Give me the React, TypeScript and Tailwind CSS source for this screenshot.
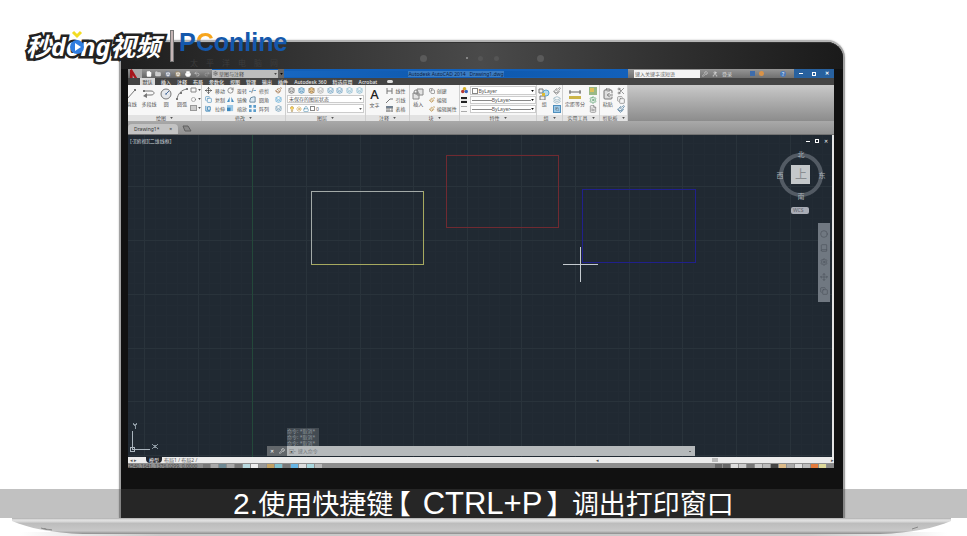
import {
  Book,
  Circle,
  ClipboardCopy,
  Copy,
  FileText,
  Folder,
  Layers,
  Lightbulb,
  Move,
  Paintbrush,
  Printer,
  Redo2,
  RotateCw,
  Save,
  Scissors,
  Settings,
  Sun,
  Undo2,
  User,
  Lock,
  Wrench,
} from "lucide-react";
import type { ReactNode } from "react";

const ribbonTabs = ["插入", "注释", "布局", "参数化", "视图", "管理", "输出", "插件", "Autodesk 360", "精选应用", "Acrobat"];

const modifyTools = [
  { label: "移动", icon: <Move className="size-[7px] text-[#222]" /> },
  { label: "旋转", icon: <RotateCw className="size-[7px] text-[#555]" /> },
  { label: "修剪", icon: <TrimIcon /> },
  { label: "复制", icon: <Copy className="size-[7px] text-[#3d86b8]" /> },
  { label: "镜像", icon: <MirrorIcon /> },
  { label: "圆角", icon: <FilletIcon /> },
  { label: "拉伸", icon: <StretchIcon /> },
  { label: "缩放", icon: <ScaleIcon /> },
  { label: "阵列", icon: <ArrayIcon /> },
];

function TrimIcon() {
  return (
    <svg viewBox="0 0 8 8" className="size-[7px]">
      <path d="M0 5h3M5 4h3" stroke="#5b9ac5" />
      <path d="M5 1 3 7" stroke="#888" />
    </svg>
  );
}

function MirrorIcon() {
  return (
    <svg viewBox="0 0 8 8" className="size-[7px]">
      <path d="M3 1v6H0zM5 1v6h3z" fill="#4a8fc0" />
    </svg>
  );
}

function FilletIcon() {
  return (
    <svg viewBox="0 0 8 8" className="size-[7px]">
      <path d="M1 7V5a4 4 0 0 1 4-4h2v6z" fill="#dbe9f3" stroke="#5c7f99" strokeWidth="1" />
    </svg>
  );
}

function StretchIcon() {
  return (
    <svg viewBox="0 0 8 8" className="size-[7px]">
      <path d="M1 1v6h5M3 2h3v4H3z" fill="none" stroke="#337fb5" strokeWidth="1" />
    </svg>
  );
}

function ScaleIcon() {
  return (
    <svg viewBox="0 0 8 8" className="size-[7px]">
      <path d="M0 0h7v7H0z" fill="#9cc8e6" />
      <path d="M0 3h4v4H0z" fill="#3b87bd" />
    </svg>
  );
}

function ArrayIcon() {
  return (
    <svg viewBox="0 0 8 8" className="size-[7px]">
      <path d="M0 0h3v3H0zM5 0h3v3H5zM0 5h3v3H0zM5 5h3v3H5z" fill="#5a9ccb" />
    </svg>
  );
}

function LineIcon() {
  return (
    <svg viewBox="0 0 12 12" className="size-3">
      <path d="M1 11 9 2" stroke="#777" />
      <path d="M0 10h2v2H0zM8 1h2v2H8z" fill="#777" />
    </svg>
  );
}

function PolylineIcon() {
  return (
    <svg viewBox="0 0 12 12" className="size-3">
      <path d="M1 3h7c4 0 4 4 0 4H2" fill="none" stroke="#777" />
      <path d="M0 8 4 5v5zM0 2h2v2H0z" fill="#777" />
    </svg>
  );
}

function CircleIcon() {
  return (
    <svg viewBox="0 0 12 12" className="size-3">
      <circle cx="6" cy="6" r="5" fill="#e6e8ec" stroke="#777" />
      <path d="m6 6 3-3M5 6h2" stroke="#4a6f9e" />
    </svg>
  );
}

function ArcIcon() {
  return (
    <svg viewBox="0 0 12 12" className="size-3">
      <path d="M1 11C2 6 5 2 11 1" fill="none" stroke="#777" />
      <path d="M0 10h2v2H0zM4 4h2v2H4zM10 0h2v2h-2z" fill="#777" />
    </svg>
  );
}

function Caret() {
  return (
    <svg viewBox="0 0 4 3" className="h-[2px] w-[3px] shrink-0">
      <path d="M0 0h4L2 3z" fill="currentColor" />
    </svg>
  );
}

function Panel({ title, className, children }: { title: string; className: string; children: ReactNode }) {
  return (
    <section className={`flex h-9 shrink-0 flex-col overflow-hidden border-r border-[#cfcfcf] bg-[#f7f7f7] text-[#555] ${className}`}>
      <div className="flex h-[30px] items-start justify-around pt-px">{children}</div>
      <h3 className="flex h-[6px] items-center justify-center gap-1 whitespace-nowrap bg-[#e2e2e2]">
        {title}
        <Caret />
      </h3>
    </section>
  );
}

function BigTool({ label, children }: { label: string; children: ReactNode }) {
  return (
    <button className="flex flex-col items-center gap-px whitespace-nowrap pt-[2px]">
      {children}
      {label}
    </button>
  );
}

function TitleBar() {
  return (
    <header className="flex h-[9px] items-center bg-[#1260ba] text-[#ddd]">
      <div className="flex h-full w-[84px] shrink-0 items-center justify-around bg-linear-to-b from-[#969696] to-[#656565]">
        <span className="flex h-full w-3 items-center bg-[#aaa]">
          <svg viewBox="0 0 10 10" className="size-[9px]">
            <path d="M0 10V1l2-1 6 10H5L3 7v3z" fill="#a8161c" />
          </svg>
        </span>
        <FileText className="size-[6px] fill-white text-white" />
        <Folder className="size-[6px] fill-[#ccc]" />
        <Save className="size-[6px] fill-[#f4f4f4] text-[#4c5f7c]" />
        <Save className="size-[6px] fill-[#f4f4f4] text-[#8a7140]" />
        <Printer className="size-[6px] fill-white text-white" />
        <Undo2 className="size-[6px]" />
        <Redo2 className="size-[6px] text-[#aaa]" />
      </div>
      <button className="flex h-[8px] w-[66px] shrink-0 items-center gap-px bg-[#bdbdbd] px-px text-[#4a4a4a]">
        <Settings className="size-[5px]" />
        <span className="grow text-left">草图与注释</span>
        <Caret />
      </button>
      <span className="flex h-full w-[6px] shrink-0 items-center justify-center bg-[#666] text-black">
        <Caret />
      </span>
      <h1 className="grow bg-linear-to-r from-[#1767c2] via-[#0e58ac] to-[#1260ba] text-center text-[#0c2144]">
        <span className="whitespace-pre bg-[#3b7cc2]">Autodesk AutoCAD 2014   Drawing1.dwg</span>
      </h1>
      <div className="flex h-full w-[166px] shrink-0 items-center bg-linear-to-b from-[#969696] to-[#707070] pl-[6px]">
        <input aria-label="搜索" placeholder="键入关键字或短语" className="h-[8px] w-[66px] bg-[#f4f4f4] pl-px placeholder:text-[#666]" />
        <span className="flex grow items-center gap-1 pl-[2px]">
          <Wrench className="size-[6px]" />
          <User className="size-[6px] text-white" />
          登录
        </span>
        <span className="flex w-[44px] items-center gap-1">
          <span className="size-[5px] bg-[#3e6cab]" />
          <span className="size-[5px] rounded-full bg-[#d99247]" />
          <span className="grow" />
          <span className="mr-2 flex size-[6px] items-center justify-center rounded-full bg-[#4b7bbb] text-white">?</span>
        </span>
      </div>
      <div className="flex h-full w-[40px] shrink-0 items-center justify-around bg-[#28619f] text-white">
        <button aria-label="最小化" className="h-px w-1 bg-white" />
        <button aria-label="还原" className="size-1 border border-white" />
        <button aria-label="关闭" className="font-bold leading-none">
          ✕
        </button>
      </div>
    </header>
  );
}

function Ribbon() {
  return (
    <div className="flex bg-linear-to-b from-[#c9c9c9] to-[#8c8c8c]">
      <Panel title="绘图" className="w-[74px]">
        <div className="-ml-1 flex w-[66px] shrink-0 justify-around">
          <BigTool label="直线">
            <LineIcon />
          </BigTool>
          <BigTool label="多段线">
            <PolylineIcon />
          </BigTool>
          <BigTool label="圆">
            <CircleIcon />
          </BigTool>
          <BigTool label="圆弧">
            <ArcIcon />
          </BigTool>
        </div>
        <div className="flex flex-col gap-[3px] pt-px">
          <span className="flex h-[6px] w-[11px] items-center justify-between">
            <svg viewBox="0 0 7 6" className="h-[6px] w-[7px]">
              <path d="M1 1h5v4H1z" fill="none" stroke="#888" />
            </svg>
            <Caret />
          </span>
          <span className="flex h-[6px] w-[11px] items-center justify-between">
            <Circle className="h-[5px] w-[7px]" />
            <Caret />
          </span>
          <span className="flex h-[6px] w-[11px] items-center justify-between">
            <span className="h-[6px] w-[7px] border border-[#999] bg-[#ccc]" />
            <Caret />
          </span>
        </div>
      </Panel>
      <Panel title="修改" className="w-[84px]">
        <div className="grid grid-cols-3 gap-x-[2px] gap-y-[2px] pt-px">
          {modifyTools.map((tool) => (
            <button key={tool.label} className="flex h-[7px] w-5 items-center gap-[3px] whitespace-nowrap">
              {tool.icon}
              {tool.label}
            </button>
          ))}
        </div>
        <div className="flex flex-col gap-[2px] pt-px">
          <Paintbrush className="size-[7px] text-[#9a6738]" />
          <Layers className="size-[7px] text-[#3b9bd2]" />
          <Layers className="size-[7px] text-[#5588a8]" />
        </div>
      </Panel>
      <Panel title="图层" className="w-[80px]">
        <div className="flex w-[77px] flex-col gap-px">
          <div className="flex h-2 items-center justify-around">
            <Layers className="size-[7px] fill-[#ddd]" />
            <Layers className="size-[7px] fill-[#bcd8ea] text-[#347cae]" />
            <Layers className="size-[7px] fill-[#f0c98a] text-[#7a5a30]" />
            <Layers className="size-[7px] text-[#999]" />
            <Layers className="size-[7px] text-[#488bb6]" />
            <Layers className="size-[7px] text-[#488bb6]" />
            <Layers className="size-[7px] text-[#6aaac8]" />
            <Layers className="size-[7px] text-[#6aaac8]" />
          </div>
          <button className="flex h-2 items-center justify-between border border-[#ccc] bg-white px-px">
            未保存的图层状态
            <Caret />
          </button>
          <button className="flex h-[9px] items-center gap-px border border-[#ccc] bg-white px-px">
            <Lightbulb className="size-[6px] fill-[#ffd861] text-[#a17821]" />
            <Sun className="size-[6px] text-[#c28a18]" />
            <Lock className="size-[6px] text-[#4386a9]" />
            <span className="size-[5px] border border-[#888]" />
            <span className="grow text-left">0</span>
            <Caret />
          </button>
        </div>
      </Panel>
      <Panel title="注释" className="w-[44px]">
        <button className="flex flex-col items-center">
          <span className="text-[13px] font-medium leading-4 text-[#222]">A</span>
          <span>文字</span>
        </button>
        <div className="flex flex-col gap-[2px] pt-px">
          <button className="flex h-[7px] items-center gap-[2px]">
            <svg viewBox="0 0 7 6" className="h-[6px] w-[7px]">
              <path d="M1 0v6M6 0v6M1 3h5" stroke="#777" />
            </svg>
            线性
          </button>
          <button className="flex h-[7px] items-center gap-[2px]">
            <svg viewBox="0 0 7 6" className="h-[6px] w-[7px]">
              <path d="m0 6 4-4h3" fill="none" stroke="#777" />
            </svg>
            引线
          </button>
          <button className="flex h-[7px] items-center gap-[2px]">
            <svg viewBox="0 0 7 6" className="h-[6px] w-[7px]">
              <path d="M0 0h7v2H0zM1 2v4M3 2v4M6 2v4M0 5h7" fill="#55769a" stroke="#888" />
            </svg>
            表格
          </button>
        </div>
      </Panel>
      <Panel title="块" className="w-[50px]">
        <BigTool label="插入">
          <svg viewBox="0 0 12 12" className="size-3">
            <path d="M1 5h6v6H1zM5 1h6v6H5z" fill="#e3e3e3" stroke="#888" />
            <circle cx="4" cy="4" r="2" fill="none" stroke="#888" />
          </svg>
        </BigTool>
        <div className="flex flex-col gap-[2px] whitespace-nowrap pt-px">
          <button className="flex h-[7px] items-center gap-[2px]">
            <Copy className="size-[6px]" />
            创建
          </button>
          <button className="flex h-[7px] items-center gap-[2px]">
            <Paintbrush className="size-[6px] text-[#b4822f]" />
            编辑
          </button>
          <button className="flex h-[7px] items-center gap-[2px]">
            <Paintbrush className="size-[6px] text-[#b4822f]" />
            编辑属性
          </button>
        </div>
      </Panel>
      <Panel title="特性" className="w-[77px]">
        <div className="grid w-[75px] grid-cols-[9px_1fr] items-center gap-y-px">
          <svg viewBox="0 0 8 8" className="size-[7px]">
            <circle cx="4" cy="2" r="2" fill="#d4b02a" />
            <circle cx="2" cy="5" r="2" fill="#b83a32" />
            <circle cx="6" cy="5" r="2" fill="#3a66bd" />
          </svg>
          <button className="flex h-[9px] items-center gap-px border border-[#ccc] bg-white px-px">
            <span className="size-[6px] border border-[#888]" />
            <span className="grow text-left">ByLayer</span>
            <span className="text-black">
              <Caret />
            </span>
          </button>
          <span className="h-[6px] w-[6px] border-y-2 border-[#222] bg-[#ddd]" />
          <button className="flex h-[8px] items-center border border-[#ccc] bg-white px-px">
            <span className="h-px grow bg-[#888]" />
            ByLayer
            <span className="h-px grow bg-[#888]" />
            <span className="text-black">
              <Caret />
            </span>
          </button>
          <span className="h-[6px] w-[6px] border-y border-dashed border-[#aaa]" />
          <button className="flex h-[8px] items-center border border-[#ccc] bg-white px-px">
            <span className="h-px grow bg-[#888]" />
            ByLayer
            <span className="h-px grow bg-[#888]" />
            <span className="text-black">
              <Caret />
            </span>
          </button>
        </div>
      </Panel>
      <Panel title="组" className="w-[26px]">
        <BigTool label="组">
          <svg viewBox="0 0 12 12" className="size-3">
            <path d="M1 1h4v4H1zM2 8h5v4H2z" fill="#eee" stroke="#777" />
            <circle cx="8" cy="5" r="3" fill="#b6dbef" stroke="#5da2cb" />
            <path d="M4 5h3v3H4z" fill="#ddba35" />
          </svg>
        </BigTool>
        <div className="flex flex-col gap-px pt-px">
          <Paintbrush className="size-2 text-[#777]" />
          <Layers className="size-2 text-[#88aabb]" />
          <span className="size-2 border border-[#4f8fbd] bg-[#9cc9e8] p-px">
            <Copy className="size-1" />
          </span>
        </div>
      </Panel>
      <Panel title="实用工具" className="w-[37px]">
        <BigTool label="定距等分">
          <svg viewBox="0 0 12 12" className="size-3">
            <path d="M0 4h12M1 2v4M11 2v4" stroke="#666" />
            <path d="M0 8h12v3H0z" fill="#cbb448" />
          </svg>
        </BigTool>
        <div className="flex flex-col gap-px pt-px">
          <span className="size-2 bg-[#9ab987] p-px">
            <span className="block size-1 bg-[#e0c15b]" />
          </span>
          <Settings className="size-2 text-[#4c9862]" />
          <FileText className="size-2 text-[#777]" />
        </div>
      </Panel>
      <Panel title="剪贴板" className="w-[28px]">
        <BigTool label="粘贴">
          <ClipboardCopy className="size-3 fill-[#ddd] text-[#777]" />
        </BigTool>
        <div className="flex flex-col gap-px pt-px">
          <Scissors className="size-2 text-[#666]" />
          <Copy className="size-2 text-[#777]" />
          <Paintbrush className="size-2 text-[#386b91]" />
        </div>
      </Panel>
    </div>
  );
}

function Drawing() {
  const steps = Array.from({ length: 70 }, (_, i) => i - 12);
  const minor = steps.filter((i) => i % 5 !== 0);
  const major = steps.filter((i) => i % 5 === 0);
  const gridPath = (lines: number[]) =>
    lines.map((i) => `M${Math.round(124 + i * 10.76)} 0v400M0 ${Math.round(105 + i * 10.76)}h900`).join("");
  return (
    <svg className="absolute inset-0 size-full" shapeRendering="crispEdges">
      <path d={gridPath(minor)} stroke="#222b34" />
      <path d={gridPath(major)} stroke="#29333b" />
      <path d="M124 0v322" stroke="#23483a" />
      <g fill="none">
        <path d="M183 129V56h112" stroke="#a3aaa8" />
        <path d="M183 129h112V56" stroke="#a6a95f" />
        <path d="M318 20h112v72H318z" stroke="#702a31" />
        <path d="M454 54h113v73H454z" stroke="#20208c" />
      </g>
      <path d="M435 129h35M452 112v35" stroke="#c5cbd0" />
      <path d="M4 296v18h18M2 312h4v4H2z" fill="none" stroke="#a9b4bd" />
      <path d="m5 288 2 3 2-3M7 291v3M24 309l6 5M30 309l-6 5" fill="none" stroke="#8a969f" />
    </svg>
  );
}

function ViewCube() {
  return (
    <svg className="absolute right-[5px] top-[14px] h-[68px] w-[52px]" viewBox="0 0 52 68">
      <circle cx="26" cy="26" r="20" fill="none" stroke="#535b64" strokeWidth="4" />
      <path d="M16 16h19v19H16z" fill="#c4c8ca" />
      <g textAnchor="middle" fontSize="7" fill="#a7afb5">
        <text x="26" y="8">北</text>
        <text x="5" y="29">西</text>
        <text x="47" y="29">东</text>
        <text x="26" y="50">南</text>
        <text x="26" y="30" fontSize="12" fill="#8a8e91">上</text>
      </g>
      <rect x="16" y="58" width="18" height="7" rx="2" fill="#a9adb6" />
      <text x="18" y="63" fontSize="5" fill="#5f646b">WCS</text>
    </svg>
  );
}

function CommandLine() {
  return (
    <div className="absolute bottom-px left-[139px] w-[428px]">
      <div className="ml-5 flex w-8 flex-col bg-[#434b52] text-[#929aa0]">
        <span className="h-[6px] whitespace-nowrap">命令: *取消*</span>
        <span className="h-[6px] whitespace-nowrap">命令: *取消*</span>
        <span className="h-[6px] whitespace-nowrap">命令: *取消*</span>
      </div>
      <div className="flex h-[10px] items-center bg-[#b5b9bb]">
        <div className="flex h-full w-5 items-center justify-around bg-[#62676b] text-white">
          <button aria-label="关闭命令行">✕</button>
          <Wrench className="size-[6px]" />
        </div>
        <span className="px-[2px] text-[#555]">▣-</span>
        <input aria-label="命令" placeholder="键入命令" className="grow bg-transparent placeholder:text-[#74787b]" />
        <span className="mr-1 h-px w-[2px] bg-[#666]" />
      </div>
    </div>
  );
}

function CadWindow() {
  return (
    <div className="overflow-hidden text-[5px] leading-[6px]">
      <TitleBar />
      <nav className="flex h-[7px] items-center gap-[6px] whitespace-nowrap bg-[#444] pl-3 font-medium text-[#e6e6e6]">
        <button className="h-full w-[15px] bg-[#d8d8d8] text-[#555]">默认</button>
        {ribbonTabs.map((tab) => (
          <button key={tab}>{tab}</button>
        ))}
        <span className="ml-1 h-[3px] w-[6px] rounded-sm bg-[#ddd]" />
      </nav>
      <Ribbon />
      <div className="flex h-[14px] items-end gap-1 border-b border-[#727272] bg-linear-to-b from-[#a9a9a9] to-[#929292]">
        <button className="flex h-[10px] w-[50px] items-center justify-between rounded-t-sm bg-[#c3c3c3] px-[6px] text-[#333]">
          Drawing1* <span>×</span>
        </button>
        <svg viewBox="0 0 10 8" className="mb-px h-2 w-[10px]">
          <path d="M1 1h5l3 5H3z" fill="#8a8a8a" stroke="#5f5f5f" />
        </svg>
      </div>
      <main className="relative h-[322px] overflow-hidden border-r-2 border-[#e4e4e4] bg-[#202932]">
        <Drawing />
        <span className="absolute left-[2px] top-[3px] text-[#c9d0d5]">[-][俯视][二维线框]</span>
        <div className="absolute right-1 top-[3px] flex items-center gap-[5px] text-white">
          <span className="h-px w-1 bg-white" />
          <span className="size-1 border border-white" />
          <span>✕</span>
        </div>
        <ViewCube />
        <div className="absolute right-[2px] top-[88px] flex h-[79px] w-3 flex-col items-center justify-around bg-[#707881] py-1 text-[#4e555d]">
          <Circle className="size-2" />
          <Book className="size-2" />
          <Settings className="size-2" />
          <Move className="size-2" />
          <Copy className="size-2" />
        </div>
        <CommandLine />
      </main>
      <div className="flex h-[6px] items-center bg-[#ececec] text-[#555]">
        <span className="w-[18px] pl-[2px]">◂ ▸</span>
        <button className="h-full w-4 rounded-b-sm bg-[#20242c] text-white">模型</button>
        <button className="whitespace-pre pl-[2px]">布局1 / 布局2 /</button>
        <span className="grow" />
        <span className="flex w-[238px] items-center justify-between">
          <span>◂</span>
          <span className="h-[4px] w-[6px] bg-[#bbb]" />
          <span>▸</span>
        </span>
      </div>
      <footer className="flex h-[5px] items-start gap-px overflow-hidden bg-[#8e8e8e] text-[#444]">
        <span className="w-[74px] shrink-0 whitespace-nowrap">2540.1641, 1376.0299, 0.0000</span>
        {["#777", "#a9a9a9", "#6f8a95", "#aaa", "#777", "#b8d9df", "#eee", "#999", "#c4a263", "#80c2cf", "#777", "#67b5e5", "#ddd", "#a9d8df", "#bbb"].map((color, i) => (
          <span key={i} className="mt-px h-1 w-[7px] shrink-0" style={{ backgroundColor: color }} />
        ))}
        <span className="grow" />
        {["#666", "#666", "#ddd", "#ccc", "#777", "#ccc", "#bbb", "#444", "#ddbb89", "#aaa", "#ddd", "#bbb", "#e57b3c", "#ded99a", "#888"].map((color, i) => (
          <span key={i} className="mt-px h-1 w-[7px] shrink-0" style={{ backgroundColor: color }} />
        ))}
      </footer>
    </div>
  );
}

function LaptopBase() {
  return (
    <svg className="block h-[18px] w-full" viewBox="0 0 967 18" preserveAspectRatio="none">
      <defs>
        <linearGradient id="metal" x2="0" y2="1">
          <stop offset="0" stopColor="#aaa" />
          <stop offset="0.12" stopColor="#e4e4e4" />
          <stop offset="0.25" stopColor="#d4d4d4" />
          <stop offset="0.32" stopColor="#bcbcbc" />
          <stop offset="0.8" stopColor="#c8c8c8" />
          <stop offset="1" stopColor="#8d8d8d" />
        </linearGradient>
        <linearGradient id="shade">
          <stop offset="0" stopColor="#fff" />
          <stop offset="0.15" stopColor="#c9c9c9" />
          <stop offset="0.85" stopColor="#c9c9c9" />
          <stop offset="1" stopColor="#fff" />
        </linearGradient>
      </defs>
      <path d="M20 14h927v4H20z" fill="url(#shade)" />
      <path d="M12 0h939v3c-16 7-40 12-71 13H83C52 15 28 10 12 3z" fill="url(#metal)" />
      <path d="M41 10c6 2 8 1 11 2M912 11l6-2" stroke="#888" />
    </svg>
  );
}

function Watermark() {
  return (
    <div className="absolute left-[26px] top-[28px] flex h-9 items-center whitespace-nowrap">
      <span className="w-[138px] text-[25px] font-bold italic leading-9 text-white [-webkit-text-stroke:5px_#222] [paint-order:stroke_fill]">
        秒dong视频
      </span>
      <svg viewBox="0 0 16 24" className="absolute left-[43px] top-[2px] h-6 w-4">
        <path d="m4 2 4 4 4-4" fill="none" stroke="#f3dc22" strokeWidth="3" />
        <circle cx="8" cy="17" r="7" fill="#2f7de0" />
        <path d="M6 13v8l6-4z" fill="#fff" />
      </svg>
      <span className="ml-[6px] h-8 w-1 border border-[#777] bg-[#c5b5b5]" />
      <span className="mb-2 ml-[5px] font-['Liberation_Sans',sans-serif] text-[25px] font-bold leading-7 text-[#1458ac]">
        P<span className="bg-linear-to-b from-[#f7a51c] from-40% to-[#1458ac] to-50% bg-clip-text text-transparent">C</span>online
      </span>
    </div>
  );
}

export default function App() {
  return (
    <div className="relative min-h-screen overflow-hidden bg-white pt-10 font-['Noto_Sans','Noto_Sans_CJK_SC',sans-serif]">
      <div className="ml-[119px] mr-[122px] rounded-t-[18px] border-2 border-b-0 border-[#a2a2a2] border-t-[#b5b5b5] bg-[#111] pb-[50px] pl-[7px] pr-[9px] shadow-[0_0_2px_#bbb]">
        <div className="-ml-[7px] -mr-[9px] grid h-[27px] grid-cols-[1fr_auto_1fr] items-center rounded-t-2xl border-t border-[#333] bg-linear-to-r from-[#1e1e1e] via-[#4a4a4a] to-[#1a1a1a] pt-1">
          <span className="flex gap-2 self-end pl-[69px] text-[8px] leading-3 text-[#3c3c3c]">
            <span>太</span>
            <span>平</span>
            <span>洋</span>
            <span>电</span>
            <span>脑</span>
            <span>网</span>
          </span>
          <span className="flex w-[124px] items-center justify-between">
            <span className="size-[7px] rounded-full bg-[#5a5a5a]" />
            <span className="ml-9 size-[2px] rounded-full bg-[#999]" />
            <span className="ml-2 size-[5px] rounded-full bg-[#555]" />
            <span className="ml-2 size-[5px] rounded-full bg-[#555]" />
            <span className="ml-9 size-[7px] rounded-full bg-[#5a5a5a]" />
          </span>
          <span />
        </div>
        <CadWindow />
      </div>
      <LaptopBase />
      <Watermark />
      <div className="absolute inset-x-0 top-[489px] h-[29px] bg-[#4c4c4c]/35">
        <p className="whitespace-nowrap text-center font-['Noto_Sans_CJK_SC',sans-serif] text-[27px] leading-[28px] text-white">
          <span className="font-['Liberation_Sans',sans-serif] text-[30px]">2.</span>
          使用快捷键
          <span className="pl-1 pr-3 [font-feature-settings:'halt']">【</span>
          <span className="font-['Liberation_Sans',sans-serif] text-[31px]">CTRL+P</span>
          <span className="pl-1 pr-3 [font-feature-settings:'halt']">】</span>
          调出打印窗口
        </p>
      </div>
    </div>
  );
}
